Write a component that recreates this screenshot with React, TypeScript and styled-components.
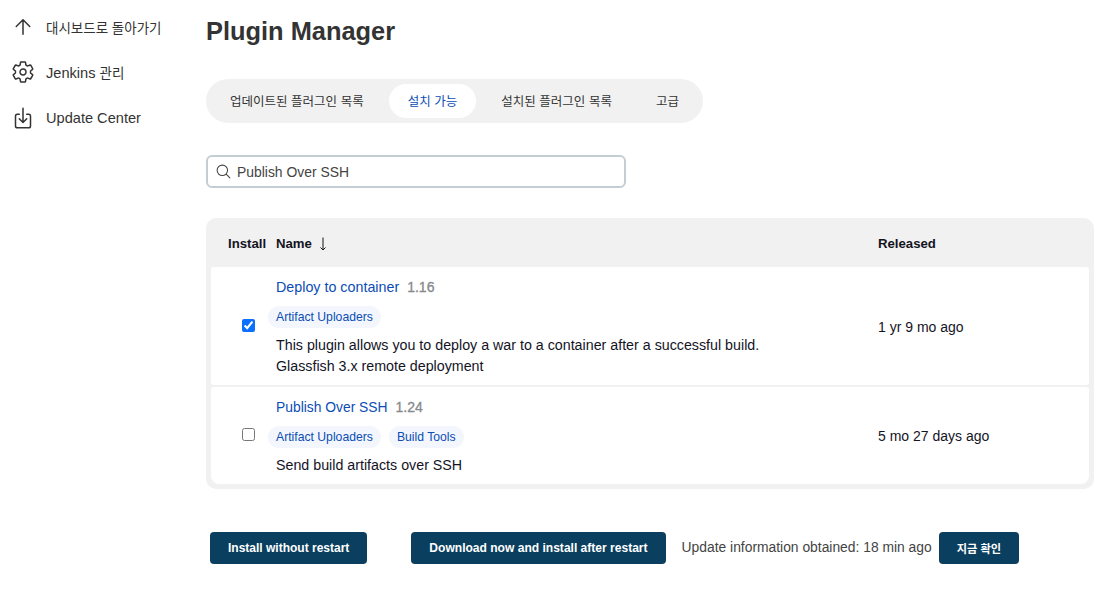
import React from 'react';
import styled, { createGlobalStyle } from 'styled-components';
import { IoArrowUpOutline, IoDownloadOutline, IoSearchOutline, IoSettingsOutline } from 'react-icons/io5';

const GlobalStyle = createGlobalStyle`
  html, body {
    margin: 0;
    padding: 0;
    background: #fff;
    font-family: "Liberation Sans", "Noto Sans CJK KR", sans-serif;
    color: #14141f;
  }
  * { box-sizing: border-box; }
`;

const Page = styled.div`
  display: flex;
  width: 1100px;
  height: 599px;
  overflow: hidden;
`;

const Sidebar = styled.nav`
  width: 206px;
  flex: none;
  display: flex;
  flex-direction: column;
  gap: 21.5px;
  padding: 14.75px 0 0 11px;
`;

const SideItem = styled.a`
  display: flex;
  align-items: center;
  gap: 11px;
  height: 24px;
  font-size: 14.6px;
  color: #333;
  white-space: nowrap;

  svg { width: 24px; height: 24px; flex: none; color: #333; }
  svg path { stroke-width: 32; }
`;

const Ko = styled.span`
  font-size: 13.5px;
`;

const Main = styled.main`
  flex: 1;
  min-width: 0;
  padding: 15px 6px 0 0;
`;

const Title = styled.h1`
  margin: 0;
  font-size: 25.4px;
  line-height: 32px;
  font-weight: 700;
  color: #333;
`;

const Tabs = styled.div`
  display: inline-flex;
  align-items: center;
  gap: 6px;
  height: 44px;
  margin-top: 32px;
  padding: 0 5px;
  border-radius: 22px;
  background: #f1f1f1;
`;

const Tab = styled.a<{ $active?: boolean }>`
  display: flex;
  align-items: center;
  height: 34px;
  padding: 0 19px 2px;
  border-radius: 17px;
  font-size: 12.5px;
  word-spacing: 0.1px;
  white-space: nowrap;
  background: ${(p) => (p.$active ? '#fff' : 'transparent')};
  color: ${(p) => (p.$active ? '#0b4db5' : '#333')};
`;

const SearchBox = styled.div`
  display: flex;
  align-items: center;
  gap: 5px;
  width: 420px;
  height: 33px;
  margin-top: 32px;
  padding: 0 7px;
  border: 2px solid #c3ced2;
  border-radius: 6px;
  font-size: 13.9px;
  color: #444;

  svg { width: 17px; height: 17px; color: #444; }
`;

const Table = styled.div`
  margin-top: 30px;
  padding: 0 5px 5px;
  border-radius: 10px;
  background: #f1f1f1;
`;

const HeadRow = styled.div`
  display: grid;
  grid-template-columns: 65px 602px 1fr;
  align-items: center;
  height: 49px;
  padding-top: 1px;
  font-size: 13.2px;
  font-weight: 700;
  color: #14141f;
`;

const InstallHead = styled.span`
  padding-left: 17px;
`;

const NameHead = styled.span`
  display: flex;
  align-items: center;
  gap: 6px;

  svg { width: 10px; height: 14px; margin-top: 1px; }
`;

const Row = styled.div<{ $height: number }>`
  display: grid;
  grid-template-columns: 65px 602px 1fr;
  align-items: center;
  height: ${(p) => p.$height}px;
  background: #fff;
  border-radius: 3px;
  font-size: 14px;
  color: #14141f;

  &:first-of-type { border-top-left-radius: 8px; border-top-right-radius: 8px; }
  & + & { margin-top: 2px; }
  &:last-child { border-bottom-left-radius: 8px; border-bottom-right-radius: 8px; }
`;

const CheckCell = styled.div`
  display: flex;
  padding-left: 31px;
`;

const CheckBox = styled.input`
  width: 13px;
  height: 13px;
  margin: -2px 0 0;
  accent-color: #0b6fff;
`;

const Info = styled.div`
  display: flex;
  flex-direction: column;
  align-items: flex-start;
  padding-top: 1px;
`;

const NameLine = styled.div`
  display: flex;
  gap: 8px;
  line-height: 20px;
`;

const PluginLink = styled.a<{ $size: number }>`
  color: #0b4db5;
  font-size: ${(p) => p.$size}px;
`;

const Version = styled.span`
  color: #85898d;
  font-size: 14px;
  -webkit-text-stroke: 0.3px #85898d;
`;

const TagRow = styled.div`
  display: flex;
  gap: 8px;
  margin: 9px 0 7px -8px;
`;

const Tag = styled.a`
  height: 22px;
  padding: 0 8px;
  border-radius: 11px;
  background: #f3f6fc;
  color: #0b4db5;
  font-size: 12.2px;
  line-height: 22px;
`;

const Excerpt = styled.div`
  font-size: 14.25px;
  line-height: 21px;
`;

const Released = styled.span`
  padding-top: 1px;
`;

const Footer = styled.div`
  display: flex;
  align-items: center;
  margin: 43px 0 0 4px;
`;

const Button = styled.button<{ $gap?: number; $size?: number }>`
  height: 32px;
  margin-right: ${(p) => p.$gap ?? 0}px;
  padding: 0 18px;
  border: none;
  border-radius: 4px;
  background: #0a3f5f;
  color: #fff;
  font-family: inherit;
  font-size: ${(p) => p.$size ?? 12}px;
  font-weight: 700;
  white-space: nowrap;
`;

const Status = styled.span`
  margin: 0 7px 2px 0;
  font-size: 13.85px;
  color: #444;
  white-space: nowrap;
`;

const SortArrow = () => (
  <svg viewBox="0 0 10 14" fill="none" stroke="currentColor" strokeWidth="1">
    <path d="M5 .5v12.5M2.5 10.5 5 13l2.5-2.5" />
  </svg>
);

export default function App() {
  return (
    <Page>
      <GlobalStyle />
      <Sidebar>
        <SideItem><IoArrowUpOutline /><Ko>대시보드로 돌아가기</Ko></SideItem>
        <SideItem><IoSettingsOutline /><span>Jenkins <Ko>관리</Ko></span></SideItem>
        <SideItem><IoDownloadOutline />Update Center</SideItem>
      </Sidebar>
      <Main>
        <Title>Plugin Manager</Title>
        <Tabs>
          <Tab>업데이트된 플러그인 목록</Tab>
          <Tab $active>설치 가능</Tab>
          <Tab>설치된 플러그인 목록</Tab>
          <Tab>고급</Tab>
        </Tabs>
        <SearchBox>
          <IoSearchOutline />
          Publish Over SSH
        </SearchBox>
        <Table>
          <HeadRow>
            <InstallHead>Install</InstallHead>
            <NameHead>Name <SortArrow /></NameHead>
            <span>Released</span>
          </HeadRow>
          <Row $height={118}>
            <CheckCell><CheckBox type="checkbox" defaultChecked /></CheckCell>
            <Info>
              <NameLine><PluginLink $size={14.3}>Deploy to container</PluginLink><Version>1.16</Version></NameLine>
              <TagRow><Tag>Artifact Uploaders</Tag></TagRow>
              <Excerpt>
                This plugin allows you to deploy a war to a container after a successful build.
                <br />
                Glassfish 3.x remote deployment
              </Excerpt>
            </Info>
            <Released>1 yr 9 mo ago</Released>
          </Row>
          <Row $height={97}>
            <CheckCell><CheckBox type="checkbox" /></CheckCell>
            <Info>
              <NameLine><PluginLink $size={13.85}>Publish Over SSH</PluginLink><Version>1.24</Version></NameLine>
              <TagRow><Tag>Artifact Uploaders</Tag><Tag>Build Tools</Tag></TagRow>
              <Excerpt>Send build artifacts over SSH</Excerpt>
            </Info>
            <Released>5 mo 27 days ago</Released>
          </Row>
        </Table>
        <Footer>
          <Button $gap={44}>Install without restart</Button>
          <Button $gap={16} $size={12.05}>Download now and install after restart</Button>
          <Status>Update information obtained: 18 min ago</Status>
          <Button $size={11.2}>지금 확인</Button>
        </Footer>
      </Main>
    </Page>
  );
}
